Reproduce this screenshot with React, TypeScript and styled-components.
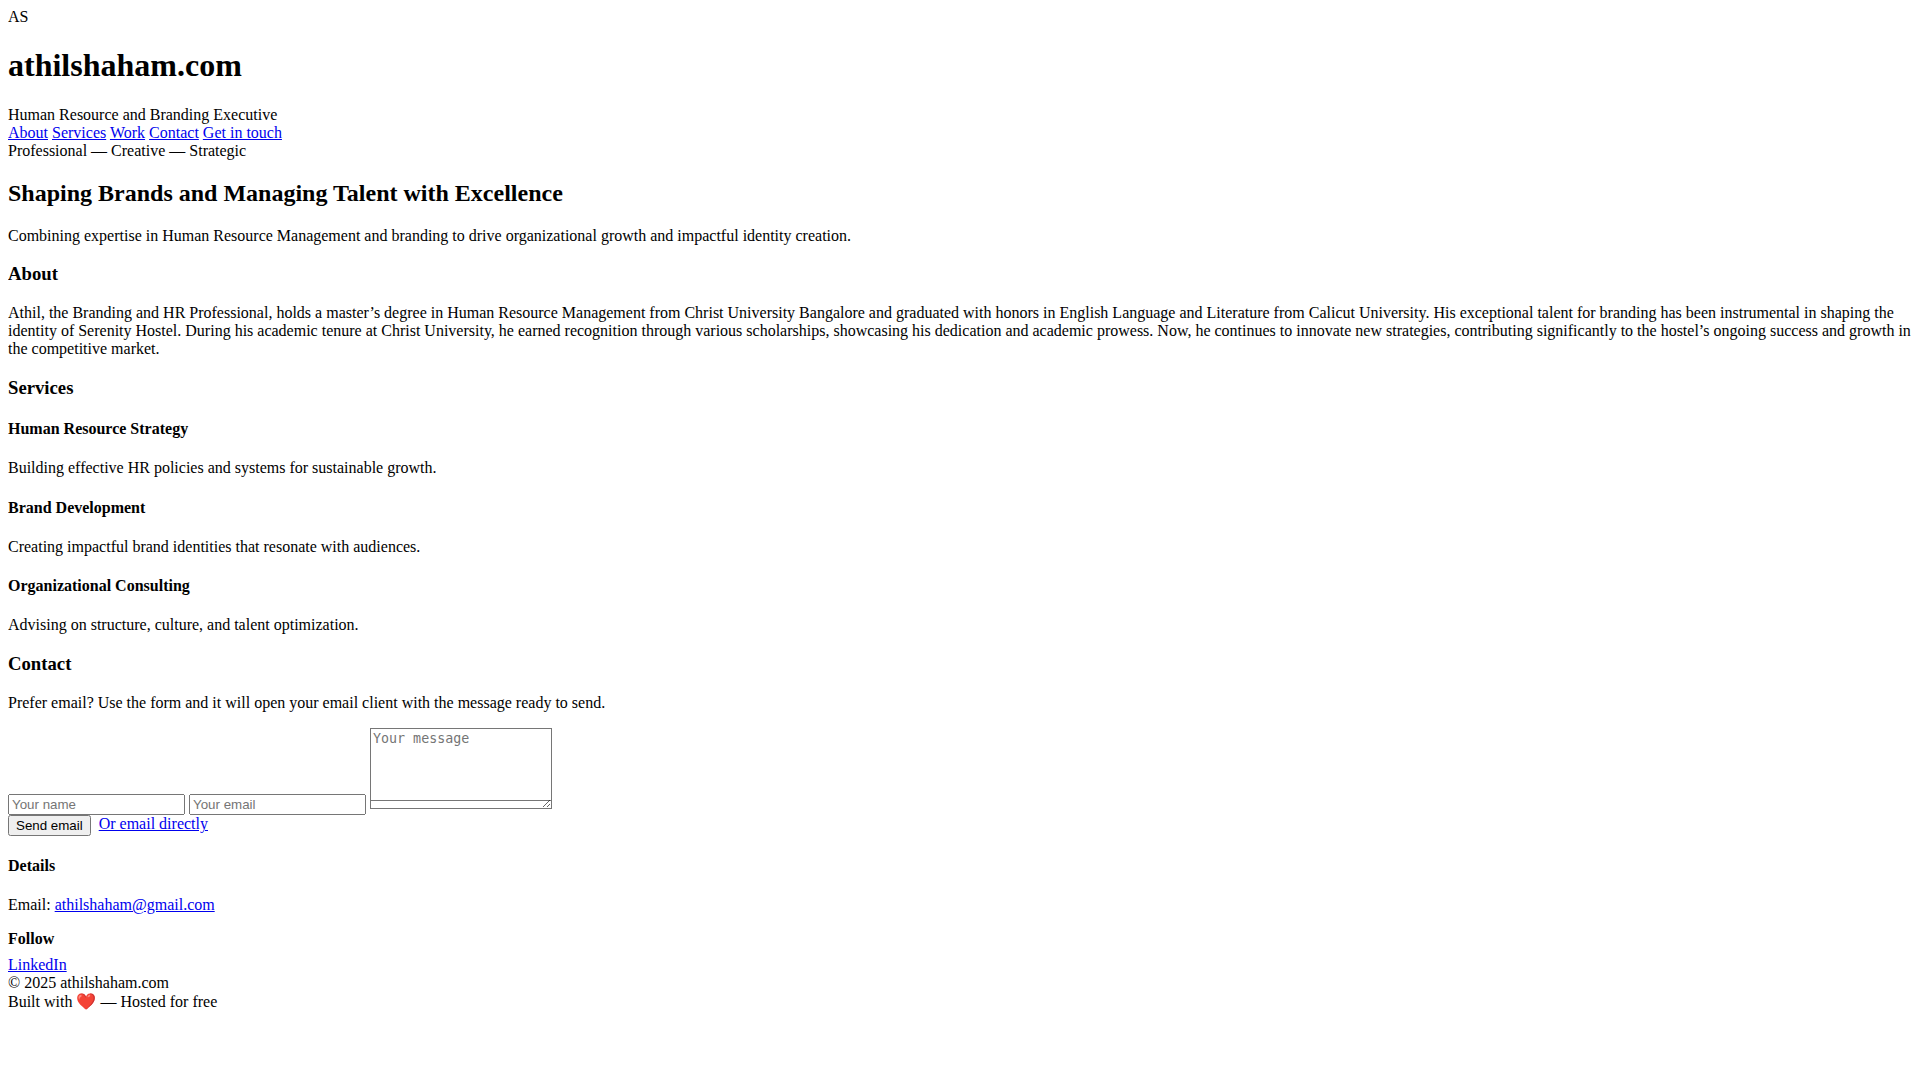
import styled, { createGlobalStyle } from "styled-components";

const GlobalStyle = createGlobalStyle`
  body {
    font-family: "Liberation Serif", "Times New Roman", serif;
    font-size: 16px;
    color: #000;
    background: #fff;
  }
`;

const Field = styled.input`
  width: 177px;
  box-sizing: border-box;
`;

const Message = styled.textarea`
  width: 182px;
  height: 81px;
  box-sizing: border-box;
  background: #fff linear-gradient(#767676, #767676) left 0 bottom 7px / 100% 1px no-repeat;
`;

const SendButton = styled.button`
  margin-right: 8px;
  vertical-align: -1px;
`;

const FollowTitle = styled.h4`
  margin: 16px 0 8px;
`;

export default function App() {
  return (
    <>
      <GlobalStyle />
      <header>
        <div>AS</div>
        <h1>athilshaham.com</h1>
        <div>Human Resource and Branding Executive</div>
        <nav>
          <a href="#about">About</a> <a href="#services">Services</a>{" "}
          <a href="#work">Work</a> <a href="#contact">Contact</a>{" "}
          <a href="#contact">Get in touch</a>
        </nav>
      </header>
      <main>
        <div>Professional — Creative — Strategic</div>
        <h2>Shaping Brands and Managing Talent with Excellence</h2>
        <p>
          Combining expertise in Human Resource Management and branding to drive
          organizational growth and impactful identity creation.
        </p>
        <h3>About</h3>
        <p>
          Athil, the Branding and HR Professional, holds a master’s degree in
          Human Resource Management from Christ University Bangalore and
          graduated with honors in English Language and Literature from Calicut
          University. His exceptional talent for branding has been instrumental
          in shaping the identity of Serenity Hostel. During his academic tenure
          at Christ University, he earned recognition through various
          scholarships, showcasing his dedication and academic prowess. Now, he
          continues to innovate new strategies, contributing significantly to
          the hostel’s ongoing success and growth in the competitive market.
        </p>
        <h3>Services</h3>
        <h4>Human Resource Strategy</h4>
        <p>Building effective HR policies and systems for sustainable growth.</p>
        <h4>Brand Development</h4>
        <p>Creating impactful brand identities that resonate with audiences.</p>
        <h4>Organizational Consulting</h4>
        <p>Advising on structure, culture, and talent optimization.</p>
        <h3>Contact</h3>
        <p>Prefer email? Use the form and it will open your email client with the message ready to send.</p>
        <form>
          <Field placeholder="Your name" /> <Field placeholder="Your email" />{" "}
          <Message placeholder="Your message" />
          <div>
            <SendButton type="button">Send email</SendButton>
            <a href="#mail">Or email directly</a>
          </div>
        </form>
        <h4>Details</h4>
        <p>
          Email: <a href="#mail">athilshaham@gmail.com</a>
        </p>
        <FollowTitle>Follow</FollowTitle>
        <a href="#li">LinkedIn</a>
      </main>
      <footer>
        <div>© 2025 athilshaham.com</div>
        <div>Built with ❤️ — Hosted for free</div>
      </footer>
    </>
  );
}
